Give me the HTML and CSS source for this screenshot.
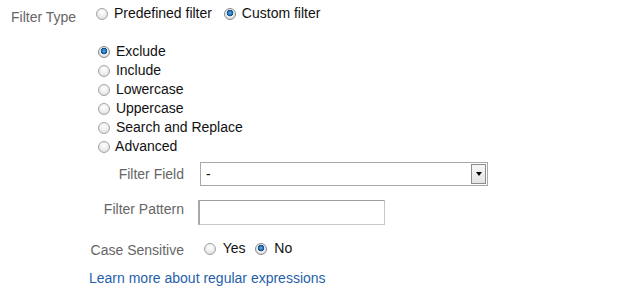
FILE: index.html
```html
<!DOCTYPE html>
<html lang="en">
<head>
  <meta charset="UTF-8">
  <meta name="viewport" content="width=device-width, initial-scale=1.0">
  <link rel="stylesheet" href="styles.css">
</head>
<body>
  <div class="form">
    <div class="type-row">
      <span class="type-label">Filter Type</span>
      <label class="opt"><input type="radio" name="ftype"> Predefined filter</label>
      <label class="opt"><input type="radio" name="ftype" checked> Custom filter</label>
    </div>

    <div class="options">
      <label class="opt"><input type="radio" name="kind" checked> Exclude</label>
      <label class="opt"><input type="radio" name="kind"> Include</label>
      <label class="opt"><input type="radio" name="kind"> Lowercase</label>
      <label class="opt"><input type="radio" name="kind"> Uppercase</label>
      <label class="opt"><input type="radio" name="kind"> Search and Replace</label>
      <label class="opt"><input type="radio" name="kind"> Advanced</label>
    </div>

    <div class="row row-field">
      <span class="label">Filter Field</span>
      <div class="select">
        <span class="select-value">-</span>
        <span class="select-btn"><span class="arrow"></span></span>
      </div>
    </div>

    <div class="row row-pattern">
      <span class="label">Filter Pattern</span>
      <input type="text" class="text-input">
    </div>

    <div class="row row-case">
      <span class="label">Case Sensitive</span>
      <div class="case-opts">
        <label class="opt"><input type="radio" name="case"> Yes</label>
        <label class="opt"><input type="radio" name="case" checked> No</label>
      </div>
    </div>

    <a href="#" class="learn">Learn more about regular expressions</a>
  </div>
</body>
</html>
```

FILE: styles.css
```css
* {
  box-sizing: border-box;
}

body {
  margin: 0;
  padding: 0;
  font-family: 'Liberation Sans', Arial, sans-serif;
  font-size: 14px;
  line-height: 19px;
  color: #111;
  background: #fff;
}

.form {
  display: flex;
  flex-direction: column;
  padding-top: 4px;
}

/* radio buttons */
.opt {
  display: block;
  white-space: nowrap;
}

.opt input {
  appearance: none;
  -webkit-appearance: none;
  display: inline-block;
  width: 12px;
  height: 12px;
  margin: 0;
  vertical-align: -2px;
  border: 1px solid #a4a4a4;
  border-radius: 50%;
  background: radial-gradient(circle at 50% 35%, #fff 0%, #f0f0f0 45%, #d4d4d4 100%);
}

.opt input:checked {
  border-color: #8a8a8a;
  background:
    radial-gradient(circle at 50% 40%, #6fb3ea 0, #1e6fb3 2px, #0c4c86 3px, transparent 3.6px),
    radial-gradient(circle at 50% 35%, #fff 0%, #eee 50%, #cfcfcf 100%);
}

.type-row {
  display: flex;
  align-items: flex-start;
}

.type-label {
  width: 96px;
  padding-left: 11px;
  padding-top: 4px;
  color: #666;
}

.type-row .opt input {
  margin-right: 2px;
}

.type-row .opt + .opt {
  margin-left: 12px;
}

.options {
  margin-top: 15px;
  padding-left: 98px;
}

.options .opt input {
  margin-right: 2px;
}

.row {
  display: flex;
  align-items: flex-start;
}

.label {
  width: 184px;
  text-align: right;
  color: #666;
}

.row-field {
  margin-top: 6px;
}

.row-field .label {
  padding-top: 3px;
}

.select {
  display: flex;
  align-items: center;
  justify-content: space-between;
  width: 288px;
  height: 24px;
  margin-left: 16px;
  border: 1px solid #a9a9a9;
  background: #fff;
}

.select-value {
  padding-left: 5px;
}

.select-btn {
  display: flex;
  align-items: center;
  justify-content: center;
  width: 15px;
  height: 20px;
  margin-right: 1px;
  border: 1px solid #8c8c8c;
  background: linear-gradient(#f7f7f7, #e4e4e4);
}

.arrow {
  width: 0;
  height: 0;
  border-left: 3.5px solid transparent;
  border-right: 3.5px solid transparent;
  border-top: 4px solid #000;
}

.row-pattern {
  margin-top: 14px;
}

.text-input {
  width: 187px;
  height: 25px;
  margin: 0 0 0 14px;
  border: 1px solid #c7c7c7;
  border-top-color: #a0a0a0;
  border-left: 2px solid #a8a8a8;
  background: #fff;
  font: inherit;
}

.row-case {
  margin-top: 14px;
}

.row-case .label {
  padding-top: 2px;
}

.case-opts {
  display: flex;
  margin-left: 20px;
}

.case-opts .opt input {
  margin-right: 3px;
}

.case-opts .opt + .opt {
  margin-left: 10px;
}

.learn {
  align-self: flex-start;
  margin-top: 9px;
  margin-left: 89px;
  color: #1f5fa9;
  text-decoration: none;
}
```
